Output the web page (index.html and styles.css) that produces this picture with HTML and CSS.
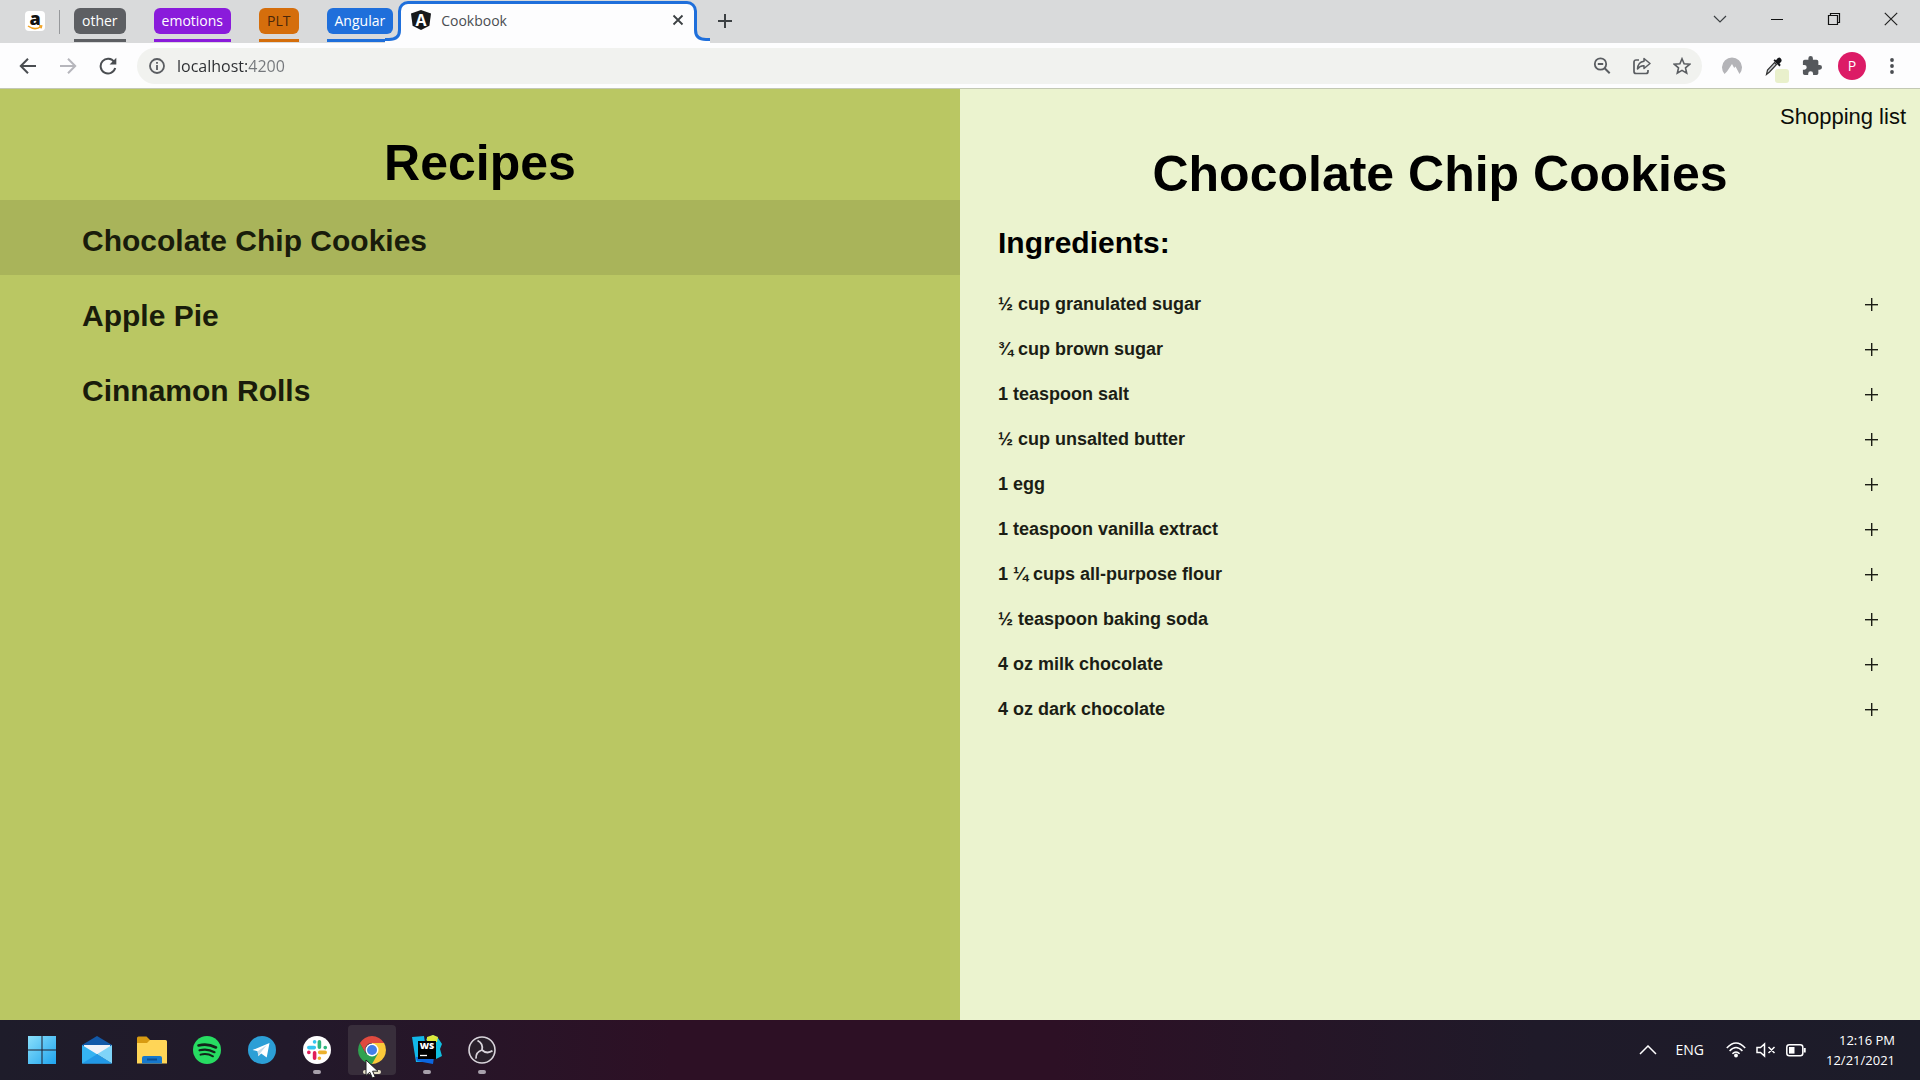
FILE: index.html
```html
<!DOCTYPE html>
<html lang="en">
<head>
<meta charset="utf-8">
<title>Cookbook</title>
<link rel="stylesheet" href="styles.css">
</head>
<body>
<header class="browser">
  <div class="tabstrip">
    <button class="pinned" aria-label="Amazon">
      <span class="amazon">a<svg class="smile" viewBox="0 0 16 5"><path d="M1 1Q8 6 14 1.500M12 .8l2.600.2-.6 2.400" fill="none" stroke="#f0a020" stroke-width="1.500"/></svg></span>
    </button>
    <span class="divider"></span>
    <div class="group other"><button class="chip">other</button></div>
    <div class="group emotions"><button class="chip">emotions</button></div>
    <div class="group plt"><button class="chip">PLT</button></div>
    <div class="group angular"><button class="chip">Angular</button></div>
    <div class="tab">
      <svg class="foot foot-left" viewBox="0 0 16 13"><path d="M16 0V13H0V9H5Q14 9 14 0Z" fill="#fdfdfe"/><path d="M0 9.500H4Q14.500 9.500 14.500 0" fill="none" stroke="#1f6fdb" stroke-width="3"/></svg>
      <svg class="tab-icon" viewBox="0 0 20 20"><path d="M10 0l10 3.500-1.600 12.200L10 20l-8.400-4.300L0 3.500z" fill="#16181b"/><text x="10" y="15.500" text-anchor="middle" class="shield-text">A</text></svg>
      <span class="tab-title">Cookbook</span>
      <button class="tab-close" aria-label="Close tab"><svg width="12" height="12" viewBox="0 0 12 12"><path d="M1.500 1.500l9 9M10.500 1.500l-9 9" stroke="#3c4043" stroke-width="1.800"/></svg></button>
      <svg class="foot foot-right" viewBox="0 0 16 13"><path d="M16 0V13H0V9H5Q14 9 14 0Z" fill="#fdfdfe"/><path d="M0 9.500H4Q14.500 9.500 14.500 0" fill="none" stroke="#1f6fdb" stroke-width="3"/></svg>
    </div>
    <button class="new-tab" aria-label="New tab"><svg width="16" height="16" viewBox="0 0 16 16"><path d="M8 1v14M1 8h14" stroke="#3c4043" stroke-width="2"/></svg></button>
    <div class="window-controls">
      <button aria-label="Search tabs"><svg width="14" height="14" viewBox="0 0 14 14"><path d="M1 4l6 6 6-6" fill="none" stroke="#3c4043" stroke-width="1.200"/></svg></button>
      <button aria-label="Minimize"><svg width="14" height="14" viewBox="0 0 14 14"><path d="M1 7.500h12" stroke="#111" stroke-width="1"/></svg></button>
      <button aria-label="Restore"><svg width="14" height="14" viewBox="0 0 14 14"><path d="M1.500 3.500h9v9h-9zM3.500 3.500v-2h9v9h-2" fill="none" stroke="#111" stroke-width="1.200"/></svg></button>
      <button aria-label="Close"><svg width="14" height="14" viewBox="0 0 14 14"><path d="M.8.8l12.400 12.400M13.200.8L.8 13.200" stroke="#222" stroke-width="1.200"/></svg></button>
    </div>
  </div>
  <div class="toolbar">
    <button class="tool" aria-label="Back"><svg width="18" height="18" viewBox="0 0 18 18"><path d="M17 9H2M9 1.800L1.800 9 9 16.200" fill="none" stroke="#4a4d51" stroke-width="2"/></svg></button>
    <button class="tool" aria-label="Forward"><svg width="18" height="18" viewBox="0 0 18 18"><path d="M1 9h15M9 1.800L16.200 9 9 16.200" fill="none" stroke="#b6b6bc" stroke-width="2"/></svg></button>
    <button class="tool" aria-label="Reload"><svg width="18" height="18" viewBox="0 0 18 18"><path d="M15.200 5A7.400 7.400 0 1 0 16.200 11" fill="none" stroke="#4a4d51" stroke-width="2"/><path d="M17.300.8v6.700h-6.700z" fill="#4a4d51"/></svg></button>
    <div class="omnibox">
      <button class="tool" aria-label="Site information"><svg width="16" height="16" viewBox="0 0 16 16"><circle cx="8" cy="8" r="7" fill="none" stroke="#5a5d61" stroke-width="1.800"/><path d="M8 7v5M8 4v1.800" stroke="#5a5d61" stroke-width="1.800"/></svg></button>
      <input class="address" type="text" aria-label="Address" value="localhost:4200">
      <button class="tool" aria-label="Zoom"><svg width="18" height="18" viewBox="0 0 18 18"><circle cx="7.500" cy="7" r="5.700" fill="none" stroke="#5a5d61" stroke-width="1.800"/><path d="M4.800 7h5.400M11.700 11.200l5 5" stroke="#5a5d61" stroke-width="2"/></svg></button>
      <button class="tool" aria-label="Share"><svg width="18" height="18" viewBox="0 0 18 18"><path d="M6 3H3a2 2 0 0 0-2 2v9.500a2 2 0 0 0 2 2h10a2 2 0 0 0 2-2V13" fill="none" stroke="#5a5d61" stroke-width="1.700"/><path d="M11 1.500l6 5-6 5V8.800Q7 8.500 4.500 12 5 5 11 4.300z" fill="none" stroke="#5a5d61" stroke-width="1.500" stroke-linejoin="round"/></svg></button>
      <button class="tool" aria-label="Bookmark"><svg width="18" height="18" viewBox="0 0 18 18"><path d="M9 1.800l2.100 5 5.500.5-4.100 3.600 1.200 5.300L9 13.400l-4.700 2.800 1.200-5.300-4.100-3.600 5.500-.5z" fill="none" stroke="#5a5d61" stroke-width="1.600"/></svg></button>
    </div>
    <div class="extensions">
      <button class="tool" aria-label="NordVPN"><svg width="20" height="18" viewBox="0 0 20 18"><path d="M2.500 17A10 10 0 1 1 17.500 17L13.500 9.500l-1.300 1.500L10 7l-5 7.500z" fill="#b4b4b8"/></svg></button>
      <button class="tool" aria-label="Color picker"><svg width="36" height="34" viewBox="0 0 36 34"><rect x="21" y="20" width="14" height="14" rx="3" fill="#e9f0cc"/><g transform="translate(11 7)"><path d="M1.500 18.500l1-4.500 7-7.500 2 2-7 7.500z" fill="#c9cdd2" stroke="#333" stroke-width="1.200"/><path d="M8.500 4.500l6 6 1.200-1.500-1.200-1.700Q18 5 15.800 2.500T11 4.300L9.700 3.300z" fill="#15171b"/></g></svg></button>
      <button class="tool" aria-label="Extensions"><svg width="20" height="20" viewBox="1 1 22 22"><path d="M20.500 11H19V7a2 2 0 0 0-2-2h-4V3.500a2.500 2.500 0 0 0-5 0V5H4a2 2 0 0 0-2 2v3.800h1.500a2.700 2.700 0 0 1 0 5.400H2V20a2 2 0 0 0 2 2h3.800v-1.500a2.700 2.700 0 0 1 5.400 0V22H17a2 2 0 0 0 2-2v-4h1.500a2.500 2.500 0 0 0 0-5z" fill="#55585c"/></svg></button>
      <button class="tool" aria-label="Profile"><span class="avatar">P</span></button>
      <button class="tool" aria-label="Menu"><svg width="4" height="18" viewBox="0 0 4 18"><g fill="#4a4d51"><circle cx="2" cy="3" r="1.900"/><circle cx="2" cy="9" r="1.900"/><circle cx="2" cy="15" r="1.900"/></g></svg></button>
    </div>
  </div>
</header>

<main class="page">
  <section class="recipes">
    <h1>Recipes</h1>
    <nav>
      <a class="recipe selected" href="#cookies">Chocolate Chip Cookies</a>
      <a class="recipe" href="#pie">Apple Pie</a>
      <a class="recipe" href="#rolls">Cinnamon Rolls</a>
    </nav>
  </section>
  <section class="detail">
    <a class="shopping" href="#list">Shopping list</a>
    <h1>Chocolate Chip Cookies</h1>
    <h2>Ingredients:</h2>
    <ul class="ingredients">
      <li>½ cup granulated sugar<button class="add" aria-label="Add"></button></li>
      <li>¾ cup brown sugar<button class="add" aria-label="Add"></button></li>
      <li>1 teaspoon salt<button class="add" aria-label="Add"></button></li>
      <li>½ cup unsalted butter<button class="add" aria-label="Add"></button></li>
      <li>1 egg<button class="add" aria-label="Add"></button></li>
      <li>1 teaspoon vanilla extract<button class="add" aria-label="Add"></button></li>
      <li>1 ¼ cups all-purpose flour<button class="add" aria-label="Add"></button></li>
      <li>½ teaspoon baking soda<button class="add" aria-label="Add"></button></li>
      <li>4 oz milk chocolate<button class="add" aria-label="Add"></button></li>
      <li>4 oz dark chocolate<button class="add" aria-label="Add"></button></li>
    </ul>
  </section>
</main>

<footer class="taskbar">
  <div class="apps">
    <button class="app" aria-label="Start"><svg width="30" height="30" viewBox="0 0 30 30"><defs><linearGradient id="win" x1="0" y1="0" x2="1" y2="1"><stop offset="0" stop-color="#8be0fb"/><stop offset="1" stop-color="#1fa4ee"/></linearGradient></defs><path d="M1 1h13.500v13.500H1zM15.500 1H29v13.500H15.500zM1 15.500h13.500V29H1zM15.500 15.500H29V29H15.500z" fill="url(#win)"/></svg></button>
    <button class="app" aria-label="Mail"><svg width="30" height="30" viewBox="0 0 30 30"><path d="M0 10L15 1l15 9v8H0z" fill="#1259a8"/><path d="M2 10h26v9H2z" fill="#f0f2f8"/><path d="M0 10l30 18.500H0z" fill="#35b3f1"/><path d="M30 10v18.500L15 19.300z" fill="#7fd4f8"/><path d="M0 28.500l15-9.200 15 9.200z" fill="#2298e6"/></svg></button>
    <button class="app" aria-label="File Explorer"><svg width="30" height="30" viewBox="0 0 30 30"><path d="M0 3q0-1.500 1.500-1.500h8L13 5v6H0z" fill="#d89b12"/><path d="M0 8h10l3-3h15.500Q30 5 30 6.500V28.500H0z" fill="#ffd557"/><path d="M5 28.500V23q0-2 2-2h16q2 0 2 2v5.500z" fill="#1678cc"/><path d="M10 24.500h10" stroke="#0b4e92" stroke-width="2"/></svg></button>
    <button class="app" aria-label="Spotify"><svg width="28" height="28" viewBox="0 0 28 28"><circle cx="14" cy="14" r="14" fill="#27dc62"/><g fill="none" stroke="#12241a" stroke-linecap="round"><path d="M5.500 9.500q9-2.500 17.500 2" stroke-width="2.600"/><path d="M6.500 14.300q8-2.200 15 1.900" stroke-width="2.200"/><path d="M7.500 18.700q6.500-1.800 12.500 1.600" stroke-width="1.900"/></g></svg></button>
    <button class="app" aria-label="Telegram"><svg width="28" height="28" viewBox="0 0 28 28"><circle cx="14" cy="14" r="14" fill="#2c9fd6"/><path d="M4.500 14L21.500 7l-2.800 14.500-5.500-4-2.800 2.700-.8-5z" fill="#fff"/><path d="M9.600 15.200l9-6-6 7.500-2.200 3.500z" fill="#c5dbe8"/></svg></button>
    <button class="app running" aria-label="Slack"><svg width="28" height="28" viewBox="0 0 28 28"><circle cx="14" cy="14" r="14" fill="#fff"/><g fill="none" stroke-width="3.600" stroke-linecap="round"><path d="M5.800 11.600h5.500M11.600 5.800v.1" stroke="#36c5f0"/><path d="M16.400 5.800v5.500M22.200 11.600h.1" stroke="#2eb67d"/><path d="M22.200 16.400h-5.500M16.400 22.200v.1" stroke="#ecb22e"/><path d="M11.600 22.200v-5.500M5.800 16.400h.1" stroke="#e01e5a"/></g></svg></button>
    <button class="app running active" aria-label="Chrome"><svg width="28" height="28" viewBox="0 0 28 28"><path d="M14 14V7h12.100A14 14 0 0 1 14 28z" fill="#fbc93a"/><path d="M14 28A14 14 0 0 1 1.900 7l6 10.500L20 17.500z" fill="#2fa24f"/><path d="M1.900 7A14 14 0 0 1 26.100 7H14a7 7 0 0 0-6.100 10.500z" fill="#e04a3f"/><circle cx="14" cy="14" r="6.500" fill="#fff"/><circle cx="14" cy="14" r="5" fill="#427fe8"/></svg>
      <svg class="cursor" width="14" height="20" viewBox="0 0 14 20"><path d="M1 1v15.500l3.800-3.300 2.600 5.800 2.800-1.200-2.600-5.600H13z" fill="#fff" stroke="#222" stroke-width="1"/></svg>
    </button>
    <button class="app running" aria-label="WebStorm"><svg width="30" height="30" viewBox="0 0 30 30"><path d="M0 2l12-1 4 26H4z" fill="#12b7e8"/><path d="M4 22h18l-1 7-16-3z" fill="#0c67e0"/><path d="M14 4l7-4 5 3 4 6-2 5 2 7-6 3z" fill="#10bfe0"/><path d="M15 2l6-2 5 2-1 5H15z" fill="#dce83c"/><path d="M6 6h18v18H6z" fill="#000"/><text x="15" y="14" text-anchor="middle" class="ws">WS</text><path d="M8 20.500h7" stroke="#fff" stroke-width="1.300"/></svg></button>
    <button class="app running" aria-label="OBS"><svg width="28" height="28" viewBox="0 0 28 28"><circle cx="14" cy="14" r="13" fill="#29202b" stroke="#d8d3da" stroke-width="1.600"/><g fill="none" stroke="#d8d3da" stroke-width="1.800"><path id="arm" d="M14 14Q15.500 7.500 9.500 4.500"/><use href="#arm" transform="rotate(120 14 14)"/><use href="#arm" transform="rotate(240 14 14)"/></g></svg></button>
  </div>
  <div class="tray">
    <button class="tray-button" aria-label="Hidden icons"><svg width="18" height="10" viewBox="0 0 18 10"><path d="M1 9l8-8 8 8" fill="none" stroke="#fff" stroke-width="1.500"/></svg></button>
    <button class="tray-button lang">ENG</button>
    <button class="tray-button status" aria-label="Network, sound and battery">
      <svg width="20" height="16" viewBox="0 0 20 16"><g fill="none" stroke="#fff" stroke-width="1.500"><path d="M.8 6Q10-4 19.200 6M3.600 9Q10 2 16.400 9M6.400 11.800Q10 8 13.600 11.800"/></g><circle cx="10" cy="13.500" r="1.900" fill="#fff"/></svg>
      <svg width="20" height="16" viewBox="0 0 20 16"><path d="M1 5.500h3.500L8.500 2v12l-4-3.500H1zM12.500 5l6 6M18.500 5l-6 6" fill="none" stroke="#fff" stroke-width="1.500"/></svg>
      <svg width="20" height="16" viewBox="0 0 20 16"><rect x=".8" y="2.800" width="16" height="11" rx="2.500" fill="none" stroke="#fff" stroke-width="1.500"/><path d="M3 5h5.500v6.600H3z" fill="#fff"/><path d="M18.700 6v4.500" stroke="#fff" stroke-width="2"/></svg>
    </button>
    <button class="tray-button clock"><span>12:16 PM</span><span>12/21/2021</span></button>
  </div>
</footer>
</body>
</html>
```

FILE: styles.css
```css
* { box-sizing: border-box; }

body {
  margin: 0;
  min-height: 100vh;
  display: flex;
  flex-direction: column;
  font-family: "Liberation Sans", Arial, sans-serif;
}

button {
  border: 0;
  padding: 0;
  background: none;
  font: inherit;
  color: inherit;
}

svg { display: block; }
h1, h2, ul { margin: 0; padding: 0; }
a { text-decoration: none; }

.browser, .taskbar { font-family: "Open Sans", "Noto Sans", sans-serif; }

/* Tab strip */
.tabstrip {
  display: flex;
  align-items: flex-start;
  height: 43px;
  padding: 0 1px 0 25px;
  background: #d9dadb;
}

.pinned {
  width: 20px;
  height: 20px;
  margin-top: 11px;
  border-radius: 4px;
  background: #fff;
}

.amazon {
  position: relative;
  display: block;
  height: 20px;
  font-size: 18px;
  font-weight: 800;
  line-height: 14px;
  color: #111;
}

.smile {
  position: absolute;
  left: 2px;
  bottom: 1px;
  width: 16px;
}

.divider {
  width: 1px;
  height: 24px;
  margin: 10px 14px 0;
  background: #96989b;
}

.group {
  height: 42px;
  margin-right: 28px;
  padding-top: 8px;
  border-bottom: 3px solid;
}

.chip {
  display: block;
  height: 26px;
  padding: 0 8px;
  border-radius: 6px;
  font-size: 14px;
  line-height: 26px;
  color: #fff;
}

.other { border-color: #5d5f63; }
.other .chip { background: #5d5f63; }
.emotions { border-color: #8a1bdb; }
.emotions .chip { background: #8a1bdb; }
.plt { border-color: #d56e0c; }
.plt .chip { background: #d56e0c; color: #4a260a; }
.angular { border-color: #1f6fdb; margin-right: 5px; }
.angular .chip { background: #1f6fdb; }

.tab {
  position: relative;
  display: flex;
  align-items: center;
  width: 299px;
  height: 42px;
  margin-top: 1px;
  padding: 0 10px 7px;
  border: 3px solid #1f6fdb;
  border-bottom: 0;
  border-radius: 10px 10px 0 0;
  background: #fdfdfe;
}

.foot {
  position: absolute;
  bottom: 0;
  width: 16px;
  height: 13px;
}

.foot-left { left: -16px; }
.foot-right { right: -16px; transform: scaleX(-1); }
.tab-icon { width: 20px; height: 20px; }
.shield-text { font-size: 16px; font-weight: 700; fill: #fff; }

.tab-title {
  flex: 1;
  margin-left: 10px;
  font-size: 14px;
  color: #4a4d51;
}

.tab-close { padding: 4px 0; }
.new-tab { margin: 13px 0 0 20px; }

.window-controls {
  display: flex;
  margin-left: auto;
}

.window-controls button {
  display: grid;
  place-items: center;
  width: 57px;
  height: 37px;
}

/* Toolbar */
.toolbar {
  display: flex;
  align-items: center;
  height: 46px;
  padding: 0 8px;
  border-bottom: 1px solid #c3c8b4;
  background: #fdfdfe;
}

.tool {
  display: grid;
  place-items: center;
  width: 40px;
  height: 36px;
  flex: none;
}

.omnibox {
  flex: 1;
  display: flex;
  margin: 0 10px 0 9px;
  border-radius: 18px;
  background: #f1f2ef;
}

.address {
  flex: 1;
  min-width: 0;
  border: 0;
  padding: 0;
  font-family: inherit;
  font-size: 16px;
  color: transparent;
  background: linear-gradient(90deg, #2b2d30 71px, #74777b 71px);
  -webkit-background-clip: text;
  background-clip: text;
}

.extensions { display: flex; }

.avatar {
  width: 28px;
  height: 28px;
  border-radius: 50%;
  background: #dc1b66;
  color: #fff;
  font-size: 14px;
  line-height: 28px;
}

/* Cookbook page */
.page {
  flex: 1;
  display: grid;
  grid-template-columns: 1fr 1fr;
}

h1 {
  font-size: 50px;
  line-height: 57px;
  text-align: center;
}

h2 {
  margin: 23px 0 22px;
  font-size: 30px;
  line-height: 34px;
}

.recipes {
  padding-top: 46px;
  background: #bac763;
}

.recipes nav { margin-top: 8px; }

.recipe {
  display: block;
  padding: 24px 82px 17px;
  font-size: 30px;
  font-weight: 700;
  line-height: 34px;
  color: #191c0b;
}

.selected { background: #a9b45a; }

.detail {
  padding: 15px 38px 0;
  background: #ebf3cf;
}

.shopping {
  display: block;
  width: fit-content;
  margin: 0 -24px 17px auto;
  font-size: 22px;
  line-height: 25px;
  color: #0c0d08;
}

.ingredients { list-style: none; }

.ingredients li {
  display: flex;
  align-items: center;
  justify-content: space-between;
  height: 45px;
  font-size: 18px;
  font-weight: 700;
  color: #1b1d15;
}

.add {
  width: 21px;
  height: 21px;
  background:
    linear-gradient(#1b1d15 50%, #1b1d1566 50%) center / 13px 2px no-repeat,
    linear-gradient(90deg, #1b1d15 50%, #1b1d1566 50%) center / 2px 13px no-repeat;
}

/* Taskbar */
.taskbar {
  display: flex;
  align-items: center;
  justify-content: space-between;
  height: 60px;
  padding: 0 25px 0 18px;
  background: linear-gradient(90deg, #1e1c2a 0%, #22192a 15%, #2d1025 35%, #2d1025 55%, #1f1a29 80%, #1c1c29 100%);
  color: #fff;
}

.apps { display: flex; gap: 7px; }

.app {
  position: relative;
  display: grid;
  place-items: center;
  width: 48px;
  height: 50px;
  border-radius: 4px;
}

.running::after {
  content: "";
  position: absolute;
  bottom: 1px;
  left: 20px;
  width: 8px;
  height: 4px;
  border-radius: 2px;
  background: #a7a0ab;
}

.active { background: #382e3b; }

.active::after {
  left: 15px;
  width: 18px;
  background: #e6e0c8;
}

.cursor {
  position: absolute;
  z-index: 1;
  left: 17px;
  top: 34px;
}

.ws {
  font-size: 9px;
  font-weight: 800;
  fill: #fff;
}

.tray {
  display: flex;
  align-items: center;
  font-size: 13px;
  line-height: 20px;
}

.lang { margin: 0 22px 0 19px; font-size: 14px; }

.status { display: flex; gap: 10px; }

.clock {
  display: flex;
  flex-direction: column;
  margin-left: 20px;
  text-align: right;
}
```
